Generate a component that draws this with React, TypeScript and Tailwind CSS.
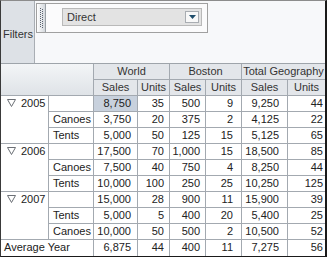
import React from "react";

type Row = { name: string; v: string[] };
type Year = { year: string; total: string[]; rows: Row[] };

const years: Year[] = [
  {
    year: "2005",
    total: ["8,750", "35", "500", "9", "9,250", "44"],
    rows: [
      { name: "Canoes", v: ["3,750", "20", "375", "2", "4,125", "22"] },
      { name: "Tents", v: ["5,000", "50", "125", "15", "5,125", "65"] },
    ],
  },
  {
    year: "2006",
    total: ["17,500", "70", "1,000", "15", "18,500", "85"],
    rows: [
      { name: "Canoes", v: ["7,500", "40", "750", "4", "8,250", "44"] },
      { name: "Tents", v: ["10,000", "100", "250", "25", "10,250", "125"] },
    ],
  },
  {
    year: "2007",
    total: ["15,000", "28", "900", "11", "15,900", "39"],
    rows: [
      { name: "Tents", v: ["5,000", "5", "400", "20", "5,400", "25"] },
      { name: "Canoes", v: ["10,000", "50", "500", "2", "10,500", "52"] },
    ],
  },
];

const avg = ["6,875", "44", "400", "11", "7,275", "56"];

// right padding of each number column
const pads = ["pr-[6px]", "pr-[5px]", "pr-[5px]", "pr-[8px]", "pr-[8px]", "pr-[2px]"];

const line = "border-b border-[#a3a9b0]";

function Num({ value, i, hl }: { value: string; i: number; hl?: boolean }) {
  const last = i === 5;
  return (
    <div
      className={`h-[16px] ${line} ${last ? "" : "border-r"} ${pads[i]} text-right leading-[15px] ${
        hl ? "bg-[#c8d1dd]" : "bg-white"
      }`}
    >
      {value}
    </div>
  );
}

function Tri() {
  return (
    <svg width="9" height="8" viewBox="0 0 9 8" className="mt-[3px] mr-[5px] shrink-0">
      <path d="M0.5 0.5 H8.5 L4.5 7.5 Z" fill="none" stroke="#6b6f75" strokeWidth="1" />
    </svg>
  );
}

function Grip() {
  const dots = [];
  for (let y = 0; y < 10; y++) {
    dots.push(<rect key={"a" + y} x="0" y={y * 2} width="1" height="1" fill="#5a6270" />);
    dots.push(<rect key={"b" + y} x="2" y={y * 2 + 1} width="1" height="1" fill="#5a6270" />);
  }
  return (
    <div className="w-[9px] h-full border-r border-[#9aa0a6] bg-gradient-to-r from-[#ffffff] to-[#d4d8dd] flex justify-center pt-[4px]">
      <svg width="3" height="20" viewBox="0 0 3 20">
        {dots}
      </svg>
    </div>
  );
}

export default function App() {
  return (
    <div className="w-[327px] h-[257px] bg-white border-l border-l-[#3a3a3a] border-t border-t-[#8c8c8c] border-r-2 border-r-[#1a1a1a] border-b border-b-[#1a1a1a] text-[11px] text-[#222] font-['Liberation_Sans',Arial,sans-serif] overflow-hidden">
      {/* filters */}
      <div className="flex h-[63px] border-b border-[#9ea4aa]">
        <div className="w-[34px] bg-[#dde1e6] border-r border-[#a9aeb4] flex items-center pl-[2px] pt-[4px] text-[#333]">
          Filters
        </div>
        <div className="flex-1 bg-[#f7f8fa] pt-[2px] pl-[1px]">
          <div className="w-[172px] h-[30px] border border-[#a0a0a0] bg-[#fbfbfc] flex">
            <Grip />
            <div className="ml-[16px] mt-[4px] w-[140px] h-[18px] border border-[#b9b9b9] bg-[#e3e3e3] flex items-center justify-between pl-[4px] pr-[2px]">
              <span className="text-[#333]">Direct</span>
              <div className="w-[14px] h-[12px] border border-[#a9adb2] bg-[#f8f8f8] flex items-center justify-center">
                <svg width="7" height="4" viewBox="0 0 7 4">
                  <path d="M0 0 H7 L3.5 4 Z" fill="#1f4d6b" />
                </svg>
              </div>
            </div>
          </div>
        </div>
      </div>

      {/* pivot table */}
      <div className="grid grid-cols-[48px_45px_44px_32px_36px_36px_46px_37px] auto-rows-[16px] text-[#222]">
        <div className={`col-span-2 row-span-2 border-r ${line} bg-gradient-to-b from-[#f3f5f7] to-[#dfe3e7]`} />
        <div className={`col-span-2 h-[16px] border-r ${line} bg-[#e3e6ea] text-center leading-[15px] text-[#333]`}>World</div>
        <div className={`col-span-2 h-[16px] border-r ${line} bg-[#e3e6ea] text-center leading-[15px] text-[#333]`}>Boston</div>
        <div className={`col-span-2 h-[16px] ${line} bg-[#e3e6ea] text-center leading-[15px] text-[#333] whitespace-nowrap`}>Total Geography</div>
        {["Sales", "Units", "Sales", "Units", "Sales", "Units"].map((h, i) => (
          <div
            key={i}
            className={`h-[16px] ${i === 5 ? "" : "border-r"} ${line} bg-[#e3e6ea] text-center leading-[15px] text-[#333]`}
          >
            {h}
          </div>
        ))}

        {years.map((y, yi) => (
          <React.Fragment key={y.year}>
            <div className={`row-span-3 border-r ${line} bg-white flex items-start pl-[6px] leading-[15px]`}>
              <Tri />
              <span>{y.year}</span>
            </div>
            <div className={`h-[16px] border-r ${line} bg-white`} />
            {y.total.map((v, i) => (
              <Num key={i} value={v} i={i} hl={yi === 0 && i === 0} />
            ))}
            {y.rows.map((r) => (
              <React.Fragment key={r.name}>
                <div className={`h-[16px] border-r ${line} bg-white pl-[4px] leading-[15px]`}>{r.name}</div>
                {r.v.map((v, i) => (
                  <Num key={i} value={v} i={i} />
                ))}
              </React.Fragment>
            ))}
          </React.Fragment>
        ))}

        <div className="col-span-2 h-[16px] border-r border-[#a3a9b0] bg-white pl-[3px] leading-[15px]">Average Year</div>
        {avg.map((v, i) => (
          <div
            key={i}
            className={`h-[16px] ${i === 5 ? "" : "border-r border-[#a3a9b0]"} ${pads[i]} text-right leading-[15px] bg-white`}
          >
            {v}
          </div>
        ))}
      </div>
    </div>
  );
}
